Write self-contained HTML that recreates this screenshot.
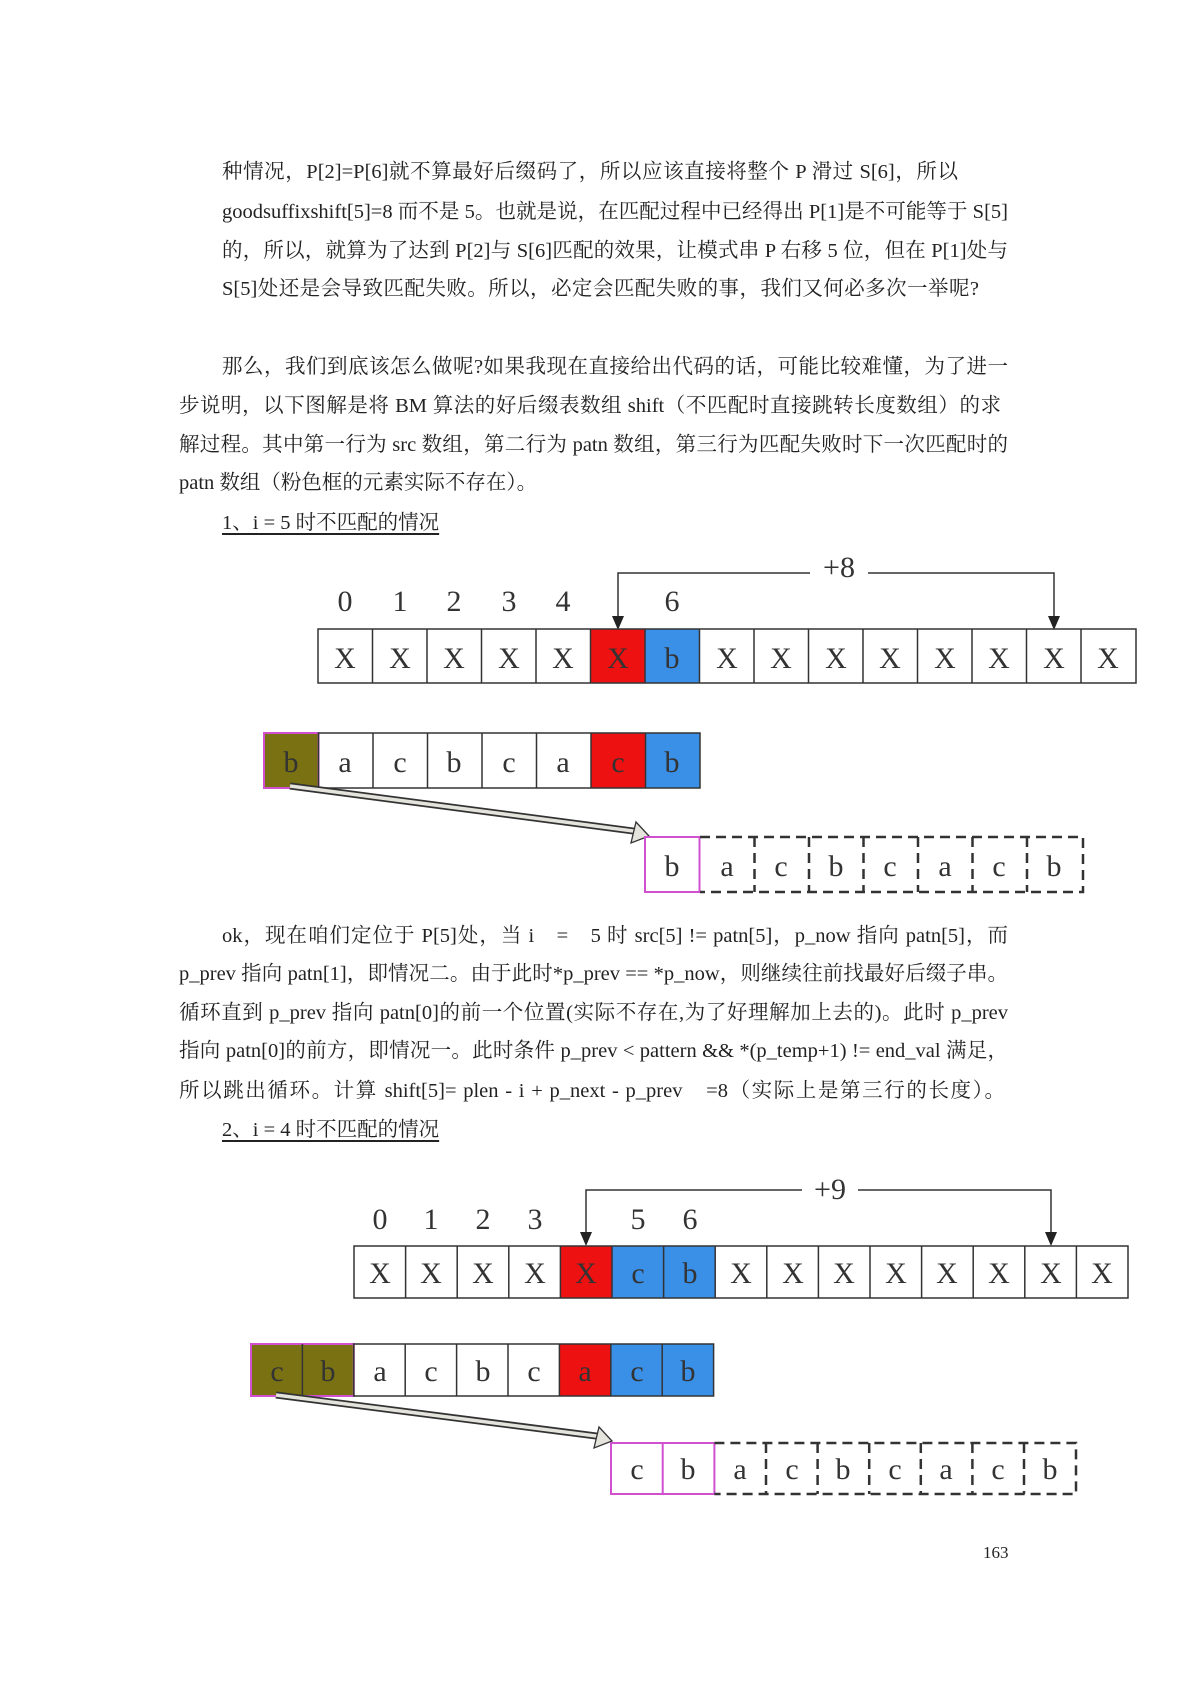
<!DOCTYPE html>
<html><head><meta charset="utf-8"><style>
body{margin:0;background:#fff;}
#p{position:relative;width:1190px;height:1683px;overflow:hidden;font-family:"Liberation Serif","Noto Serif CJK SC","Noto Sans CJK SC",serif;color:#222;}
.l{position:absolute;font-size:20.5px;line-height:26px;white-space:nowrap;}
.j{text-align:justify;text-align-last:justify;white-space:normal;height:26px;overflow:hidden;}
.u{text-decoration:underline;text-underline-offset:4px;}
svg{position:absolute;left:0;top:0;}
svg text{font-family:"Liberation Serif",serif;font-size:30px;fill:#333;text-anchor:middle;font-stretch:condensed;}
</style></head><body><div id="p">
<div class="l j" style="left:222px;top:159px;width:736px">种情况，P[2]=P[6]就不算最好后缀码了，所以应该直接将整个 P 滑过 S[6]，所以</div>
<div class="l j" style="left:222px;top:199px;width:786px">goodsuffixshift[5]=8 而不是 5。也就是说，在匹配过程中已经得出 P[1]是不可能等于 S[5]</div>
<div class="l j" style="left:222px;top:238px;width:786px">的，所以，就算为了达到 P[2]与 S[6]匹配的效果，让模式串 P 右移 5 位，但在 P[1]处与</div>
<div class="l j" style="left:222px;top:276px;width:757px">S[5]处还是会导致匹配失败。所以，必定会匹配失败的事，我们又何必多次一举呢?</div>

<div class="l j" style="left:222px;top:354px;width:786px">那么，我们到底该怎么做呢?如果我现在直接给出代码的话，可能比较难懂，为了进一</div>
<div class="l j" style="left:179px;top:393px;width:822px">步说明，以下图解是将 BM 算法的好后缀表数组 shift（不匹配时直接跳转长度数组）的求</div>
<div class="l j" style="left:179px;top:432px;width:829px">解过程。其中第一行为 src 数组，第二行为 patn 数组，第三行为匹配失败时下一次匹配时的</div>
<div class="l" style="left:179px;top:470px">patn 数组（粉色框的元素实际不存在）。</div>
<div class="l u" style="left:222px;top:510px">1、i = 5 时不匹配的情况</div>

<div class="l j" style="left:222px;top:923px;width:786px">ok，现在咱们定位于 P[5]处，当 i　=　5 时 src[5] != patn[5]，p_now 指向 patn[5]，而</div>
<div class="l j" style="left:179px;top:961px;width:829px">p_prev 指向 patn[1]，即情况二。由于此时*p_prev == *p_now，则继续往前找最好后缀子串。</div>
<div class="l j" style="left:179px;top:1000px;width:829px">循环直到 p_prev 指向 patn[0]的前一个位置(实际不存在,为了好理解加上去的)。此时 p_prev</div>
<div class="l j" style="left:179px;top:1038px;width:829px">指向 patn[0]的前方，即情况一。此时条件 p_prev &lt; pattern &amp;&amp; *(p_temp+1) != end_val 满足，</div>
<div class="l j" style="left:179px;top:1078px;width:826px">所以跳出循环。计算 shift[5]= plen - i + p_next - p_prev　=8（实际上是第三行的长度）。</div>
<div class="l u" style="left:222px;top:1117px">2、i = 4 时不匹配的情况</div>
<div class="l" style="left:983px;top:1540px;font-size:17px">163</div>

<svg width="1190" height="1683" viewBox="0 0 1190 1683">
<g><text x="345" y="611" font-size="25">0</text><text x="400" y="611" font-size="25">1</text><text x="454" y="611" font-size="25">2</text><text x="509" y="611" font-size="25">3</text><text x="563" y="611" font-size="25">4</text><text x="672" y="611" font-size="25">6</text><text x="839" y="577" font-size="25">+8</text></g>
<path d="M810,573H618V618M868,573H1054V618" fill="none" stroke="#333" stroke-width="1.5"/>
<path d="M612,616L618,630L624,616ZM1048,616L1054,630L1060,616Z" fill="#222"/>
<rect x="590" y="629" width="54.5" height="54" fill="#ee1111"/><rect x="644.5" y="629" width="54.5" height="54" fill="#3a8fe6"/>
<g stroke="#333" stroke-width="1.5" fill="none"><rect x="318" y="629" width="818" height="54"/>
<path d="M372.5,629v54M427,629v54M481.5,629v54M536,629v54M590.5,629v54M645,629v54M699.5,629v54M754,629v54M808.5,629v54M863,629v54M917.5,629v54M972,629v54M1026.5,629v54M1081,629v54"/></g>
<g><text x="345" y="668">X</text><text x="400" y="668">X</text><text x="454" y="668">X</text><text x="509" y="668">X</text><text x="563" y="668">X</text><text x="618" y="668" fill="#aa1111">X</text><text x="672" y="668">b</text><text x="727" y="668">X</text><text x="781" y="668">X</text><text x="836" y="668">X</text><text x="890" y="668">X</text><text x="945" y="668">X</text><text x="999" y="668">X</text><text x="1054" y="668">X</text><text x="1108" y="668">X</text></g>
<rect x="264" y="733" width="54.5" height="55" fill="#7a7212" stroke="#d050d0" stroke-width="2"/>
<rect x="591" y="733" width="54.5" height="55" fill="#ee1111"/><rect x="645.5" y="733" width="54.5" height="55" fill="#3a8fe6"/>
<g stroke="#333" stroke-width="1.5" fill="none"><rect x="318.5" y="733" width="381.5" height="55"/><path d="M373,733v55M427.5,733v55M482,733v55M536.5,733v55M591,733v55M645.5,733v55"/></g>
<g><text x="291" y="772">b</text><text x="345" y="772">a</text><text x="400" y="772">c</text><text x="454" y="772">b</text><text x="509" y="772">c</text><text x="563" y="772">a</text><text x="618" y="772" fill="#aa1111">c</text><text x="672" y="772">b</text></g>
<path d="M290,786L641,832" stroke="#333" stroke-width="7"/><path d="M290,786L641,832" stroke="#e4e4dc" stroke-width="3.5"/>
<path d="M636,822L649,836L631,843Z" fill="#e4e4dc" stroke="#333" stroke-width="1.3"/>
<rect x="645" y="837" width="54.5" height="55" fill="none" stroke="#d050d0" stroke-width="2"/>
<g stroke="#333" stroke-width="2.5" fill="none" stroke-dasharray="10,6"><path d="M700,837H1083V892H700M754.5,837v55M809,837v55M863.5,837v55M918,837v55M972.5,837v55M1027,837v55"/></g>
<g><text x="672" y="876">b</text><text x="727" y="876">a</text><text x="781" y="876">c</text><text x="836" y="876">b</text><text x="890" y="876">c</text><text x="945" y="876">a</text><text x="999" y="876">c</text><text x="1054" y="876">b</text></g>

<g><text x="380" y="1229" font-size="25">0</text><text x="431" y="1229" font-size="25">1</text><text x="483" y="1229" font-size="25">2</text><text x="535" y="1229" font-size="25">3</text><text x="638" y="1229" font-size="25">5</text><text x="690" y="1229" font-size="25">6</text><text x="830" y="1199" font-size="25">+9</text></g>
<path d="M802,1190H586V1234M858,1190H1051V1234" fill="none" stroke="#333" stroke-width="1.5"/>
<path d="M580,1232L586,1246L592,1232ZM1045,1232L1051,1246L1057,1232Z" fill="#222"/>
<rect x="560" y="1246" width="51.6" height="52" fill="#ee1111"/><rect x="611.6" y="1246" width="103.2" height="52" fill="#3a8fe6"/>
<g stroke="#333" stroke-width="1.5" fill="none"><rect x="354" y="1246" width="774" height="52"/>
<path d="M405.6,1246v52M457.2,1246v52M508.8,1246v52M560.4,1246v52M612,1246v52M663.6,1246v52M715.2,1246v52M766.8,1246v52M818.4,1246v52M870,1246v52M921.6,1246v52M973.2,1246v52M1024.8,1246v52M1076.4,1246v52"/></g>
<g><text x="380" y="1283">X</text><text x="431" y="1283">X</text><text x="483" y="1283">X</text><text x="535" y="1283">X</text><text x="586" y="1283" fill="#aa1111">X</text><text x="638" y="1283">c</text><text x="690" y="1283">b</text><text x="741" y="1283">X</text><text x="793" y="1283">X</text><text x="844" y="1283">X</text><text x="896" y="1283">X</text><text x="947" y="1283">X</text><text x="999" y="1283">X</text><text x="1051" y="1283">X</text><text x="1102" y="1283">X</text></g>
<rect x="251" y="1344" width="102.8" height="52" fill="#7a7212" stroke="#d050d0" stroke-width="2"/>
<rect x="559.4" y="1344" width="51.4" height="52" fill="#ee1111"/><rect x="610.8" y="1344" width="102.8" height="52" fill="#3a8fe6"/>
<g stroke="#333" stroke-width="1.5" fill="none"><rect x="353.8" y="1344" width="359.8" height="52"/><path d="M302.4,1344v52M405.2,1344v52M456.6,1344v52M508,1344v52M559.4,1344v52M610.8,1344v52M662.2,1344v52"/></g>
<g><text x="277" y="1381">c</text><text x="328" y="1381">b</text><text x="380" y="1381">a</text><text x="431" y="1381">c</text><text x="483" y="1381">b</text><text x="534" y="1381">c</text><text x="585" y="1381" fill="#aa1111">a</text><text x="637" y="1381">c</text><text x="688" y="1381">b</text></g>
<path d="M276,1395L604,1437" stroke="#333" stroke-width="7"/><path d="M276,1395L604,1437" stroke="#e4e4dc" stroke-width="3.5"/>
<path d="M599,1427L612,1441L594,1448Z" fill="#e4e4dc" stroke="#333" stroke-width="1.3"/>
<rect x="611" y="1443" width="103.4" height="51" fill="none" stroke="#d050d0" stroke-width="2"/><path d="M662.7,1443v51" stroke="#d050d0" stroke-width="2"/>
<g stroke="#333" stroke-width="2.5" fill="none" stroke-dasharray="10,6"><path d="M714.4,1443H1076V1494H714.4M766,1443v51M817.6,1443v51M869.2,1443v51M920.8,1443v51M972.4,1443v51M1024,1443v51"/></g>
<g><text x="637" y="1479">c</text><text x="688" y="1479">b</text><text x="740" y="1479">a</text><text x="792" y="1479">c</text><text x="843" y="1479">b</text><text x="895" y="1479">c</text><text x="946" y="1479">a</text><text x="998" y="1479">c</text><text x="1050" y="1479">b</text></g>
</svg>
</div></body></html>
